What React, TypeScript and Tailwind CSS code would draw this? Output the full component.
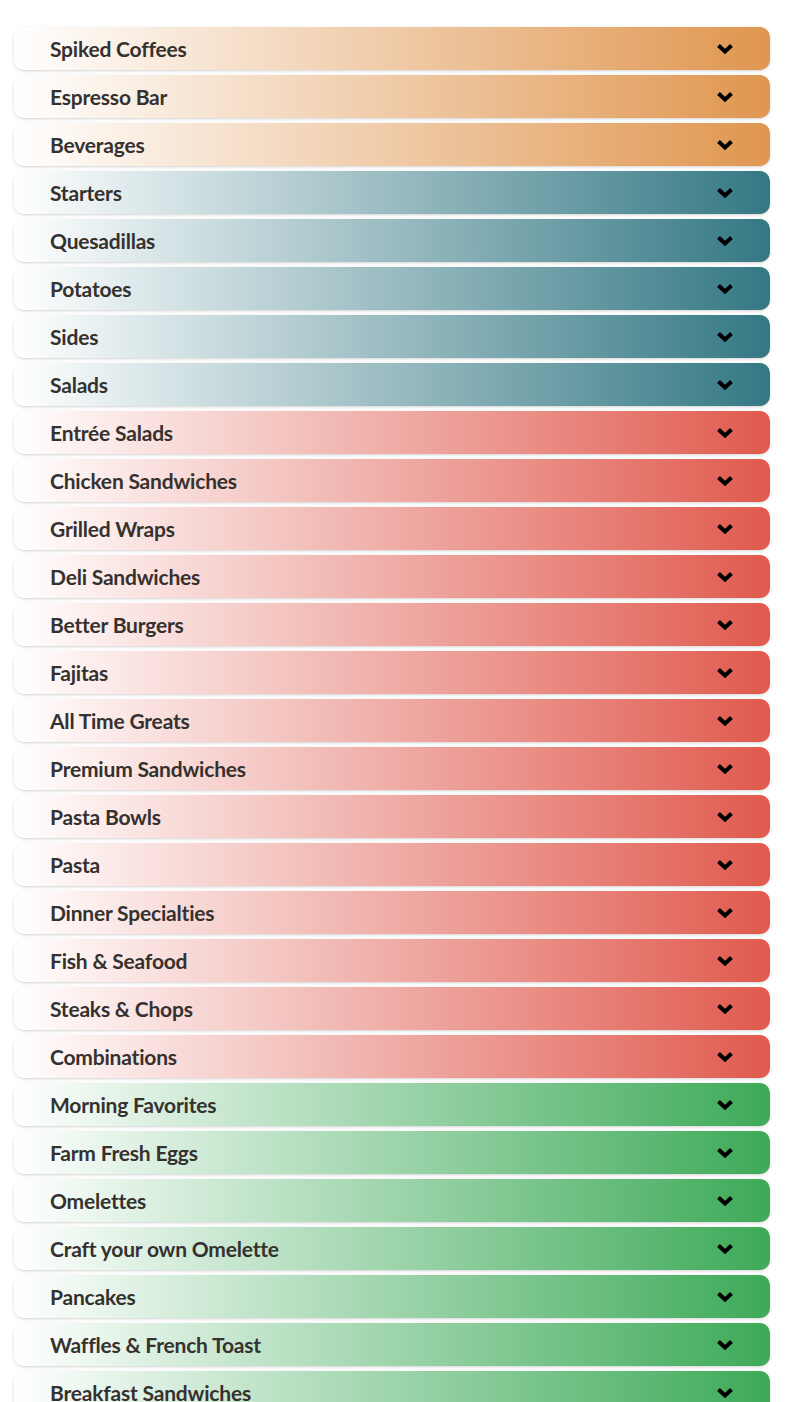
const groups = [
  {
    to: '#e0964f',
    items: ['Spiked Coffees', 'Espresso Bar', 'Beverages'],
  },
  {
    to: '#347884',
    items: ['Starters', 'Quesadillas', 'Potatoes', 'Sides', 'Salads'],
  },
  {
    to: '#e05a4e',
    items: [
      'Entrée Salads',
      'Chicken Sandwiches',
      'Grilled Wraps',
      'Deli Sandwiches',
      'Better Burgers',
      'Fajitas',
      'All Time Greats',
      'Premium Sandwiches',
      'Pasta Bowls',
      'Pasta',
      'Dinner Specialties',
      'Fish & Seafood',
      'Steaks & Chops',
      'Combinations',
    ],
  },
  {
    to: '#3daa58',
    items: [
      'Morning Favorites',
      'Farm Fresh Eggs',
      'Omelettes',
      'Craft your own Omelette',
      'Pancakes',
      'Waffles & French Toast',
      'Breakfast Sandwiches',
    ],
  },
];

const Chevron = () => (
  <svg width="18" height="12" viewBox="0 0 18 12" className="shrink-0">
    <path d="M2.5 2.5 L9 8.5 L15.5 2.5" fill="none" stroke="#000" strokeWidth="4" strokeLinecap="butt" strokeLinejoin="miter" />
  </svg>
);

const MenuRow = ({ label, to }: { label: string; to: string }) => (
  <button
    className="w-full h-[43px] shrink-0 flex items-center justify-between pl-9 pr-9 rounded-[10px] shadow-[0_1px_3px_rgba(0,0,0,0.18)] text-left"
    style={{ backgroundImage: `linear-gradient(to right, #ffffff 0%, ${to} 100%)` }}
  >
    <span className="text-[21px] font-bold text-[#35312f] tracking-[-0.2px]" style={{ fontFamily: 'Lato, "Liberation Sans", sans-serif' }}>
      {label}
    </span>
    <Chevron />
  </button>
);

export default function App() {
  return (
    <div className="bg-white pt-[27px] pl-[14px] pr-[15px] flex flex-col gap-[5px] h-[1402px] overflow-hidden">
      {groups.flatMap((g) =>
        g.items.map((it) => <MenuRow key={it} label={it} to={g.to} />)
      )}
    </div>
  );
}
